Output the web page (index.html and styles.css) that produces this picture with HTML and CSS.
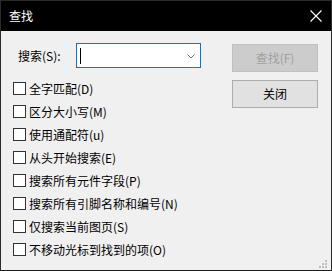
FILE: index.html
```html
<!DOCTYPE html>
<html lang="zh-CN">
<head>
<meta charset="utf-8">
<title>查找</title>
<link rel="stylesheet" href="styles.css">
</head>
<body>
<div class="window">
  <div class="titlebar">
    <span class="title">查找</span>
    <svg class="close-x" width="12" height="12" viewBox="0 0 12 12"><path d="M0.5 0.5 L11.5 11.5 M11.5 0.5 L0.5 11.5" stroke="#fff" stroke-width="1.1" fill="none"/></svg>
  </div>
  <div class="content">
    <div class="main">
      <div class="search-row">
        <label class="search-label">搜索(S):</label>
        <div class="combo">
          <span class="caret"></span>
          <svg class="chevron" width="8" height="5" viewBox="0 0 8 5"><path d="M0.5 0.5 L4 4 L7.5 0.5" stroke="#707070" stroke-width="1" fill="none"/></svg>
        </div>
      </div>
      <ul class="options">
        <li class="opt"><span class="box"></span><span>全字匹配(D)</span></li>
        <li class="opt"><span class="box"></span><span>区分大小写(M)</span></li>
        <li class="opt"><span class="box"></span><span>使用通配符(u)</span></li>
        <li class="opt"><span class="box"></span><span>从头开始搜索(E)</span></li>
        <li class="opt"><span class="box"></span><span>搜索所有元件字段(P)</span></li>
        <li class="opt"><span class="box"></span><span>搜索所有引脚名称和编号(N)</span></li>
        <li class="opt"><span class="box"></span><span>仅搜索当前图页(S)</span></li>
        <li class="opt"><span class="box"></span><span>不移动光标到找到的项(O)</span></li>
      </ul>
    </div>
    <div class="buttons">
      <button class="btn disabled" disabled>查找(F)</button>
      <button class="btn">关闭</button>
    </div>
    <svg class="grip" width="9" height="9" viewBox="0 0 9 9">
      <rect x="6" y="0" width="2" height="2" fill="#bcbcbc"/>
      <rect x="3" y="3" width="2" height="2" fill="#bcbcbc"/>
      <rect x="6" y="3" width="2" height="2" fill="#bcbcbc"/>
      <rect x="0" y="6" width="2" height="2" fill="#bcbcbc"/>
      <rect x="3" y="6" width="2" height="2" fill="#bcbcbc"/>
      <rect x="6" y="6" width="2" height="2" fill="#bcbcbc"/>
    </svg>
  </div>
</div>
</body>
</html>
```
FILE: styles.css
```css
* { box-sizing: border-box; }
html, body { margin: 0; padding: 0; }
body {
  font-family: "Noto Sans CJK SC", "Noto Sans", sans-serif;
  font-size: 12px;
  color: #000;
  background: #f0f0f0;
}
.window {
  width: 332px;
  height: 271px;
  border: 1px solid #2b2b2b;
  border-bottom-color: #1c1c1c;
  display: flex;
  flex-direction: column;
}
.titlebar {
  height: 30px;
  background: #000;
  color: #fff;
  display: flex;
  align-items: center;
  justify-content: space-between;
  padding: 0 8px 0 8px;
  flex: none;
}
.title { font-size: 12px; line-height: 16px; }
.close-x { margin-right: 1px; }
.content {
  flex: 1;
  background: #f0f0f0;
  position: relative;
  display: flex;
}
.main {
  width: 231px;
  padding: 12px 0 0 12px;
}
.search-row {
  display: flex;
  align-items: center;
  height: 25px;
  padding-left: 5px;
}
.search-label {
  width: 58px;
  line-height: 16px;
}
.combo {
  width: 125px;
  height: 25px;
  border: 1px solid #0078d7;
  background: #fff;
  display: flex;
  align-items: center;
  justify-content: space-between;
  padding: 0 5px 0 3px;
}
.caret {
  width: 1px;
  height: 16px;
  background: #000;
}
.chevron { margin-top: 1px; }
.options {
  list-style: none;
  margin: 9px 0 0 0;
  padding: 0;
}
.opt {
  height: 23px;
  display: flex;
  align-items: center;
  gap: 3px;
  line-height: 16px;
  white-space: nowrap;
}
.box {
  width: 13px;
  height: 13px;
  border: 1px solid #333;
  background: #fff;
  flex: none;
}
.buttons {
  padding-top: 13px;
  display: flex;
  flex-direction: column;
  gap: 8px;
}
.btn {
  width: 86px;
  height: 28px;
  font-family: inherit;
  font-size: 12px;
  line-height: 16px;
  padding: 0;
  border: 1px solid #adadad;
  background: #e1e1e1;
  color: #000;
}
.btn.disabled {
  background: #cccccc;
  border-color: #bfbfbf;
  color: #a0a0a0;
}
.grip {
  position: absolute;
  right: 3px;
  bottom: 1px;
}
```
